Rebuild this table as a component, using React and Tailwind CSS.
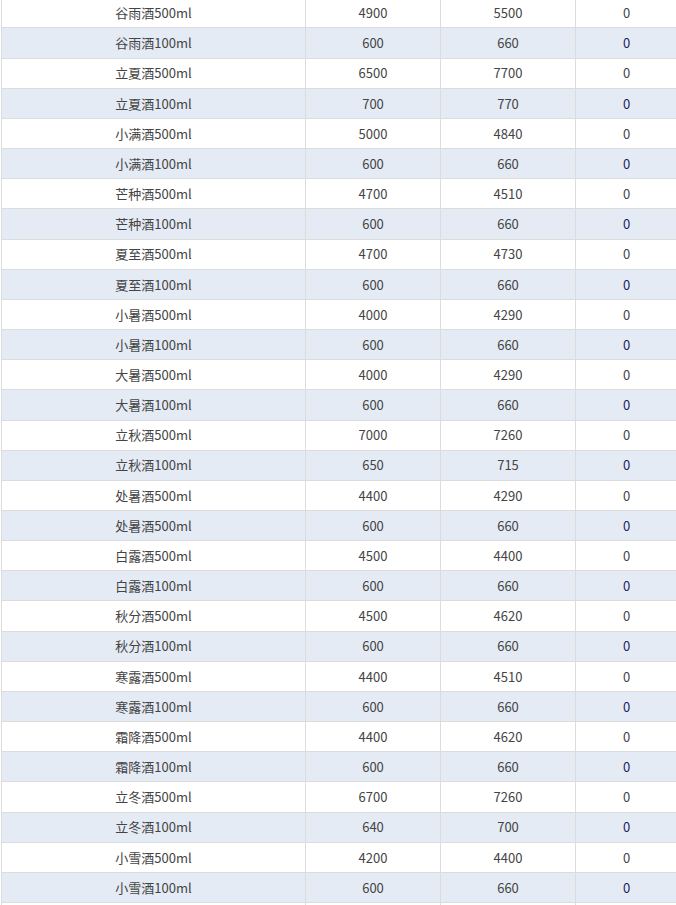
import React from "react";

const rows = [
  ["谷雨酒500ml", 4900, 5500],
  ["谷雨酒100ml", 600, 660],
  ["立夏酒500ml", 6500, 7700],
  ["立夏酒100ml", 700, 770],
  ["小满酒500ml", 5000, 4840],
  ["小满酒100ml", 600, 660],
  ["芒种酒500ml", 4700, 4510],
  ["芒种酒100ml", 600, 660],
  ["夏至酒500ml", 4700, 4730],
  ["夏至酒100ml", 600, 660],
  ["小暑酒500ml", 4000, 4290],
  ["小暑酒100ml", 600, 660],
  ["大暑酒500ml", 4000, 4290],
  ["大暑酒100ml", 600, 660],
  ["立秋酒500ml", 7000, 7260],
  ["立秋酒100ml", 650, 715],
  ["处暑酒500ml", 4400, 4290],
  ["处暑酒500ml", 600, 660],
  ["白露酒500ml", 4500, 4400],
  ["白露酒100ml", 600, 660],
  ["秋分酒500ml", 4500, 4620],
  ["秋分酒100ml", 600, 660],
  ["寒露酒500ml", 4400, 4510],
  ["寒露酒100ml", 600, 660],
  ["霜降酒500ml", 4400, 4620],
  ["霜降酒100ml", 600, 660],
  ["立冬酒500ml", 6700, 7260],
  ["立冬酒100ml", 640, 700],
  ["小雪酒500ml", 4200, 4400],
  ["小雪酒100ml", 600, 660],
];

export default function App() {
  return (
    <div
      className="h-[905px] overflow-hidden bg-white text-[13px] text-[#444]"
      style={{ fontFamily: '"Noto Sans CJK SC", "Noto Sans", sans-serif' }}
    >
      <div className="ml-px -mt-[1.7px] w-[676px] border-l border-[#dcdcdc]">
        {rows.map(([name, cost, price], i) => {
          const odd = i % 2 === 1;
          return (
            <div
              key={i}
              className={`grid h-[30.16px] grid-cols-[304px_135px_135px_102px] border-b border-[#dcdcdc] ${
                odd ? "bg-[#e5ebf5]" : "bg-white"
              }`}
            >
              <div className="flex items-center justify-center border-r border-[#dcdcdc]">
                {name}
              </div>
              <div className="flex items-center justify-center border-r border-[#dcdcdc]">
                {cost}
              </div>
              <div className="flex items-center justify-center border-r border-[#dcdcdc]">
                {price}
              </div>
              <div
                className={`flex items-center justify-center border-r border-[#dcdcdc] ${
                  odd ? "text-[#1e2460]" : ""
                }`}
              >
                0
              </div>
            </div>
          );
        })}
        {/* next row, only its top edge is on screen */}
        <div className="grid h-[30.16px] grid-cols-[304px_135px_135px_102px]">
          <div className="border-r border-[#dcdcdc]" />
          <div className="border-r border-[#dcdcdc]" />
          <div className="border-r border-[#dcdcdc]" />
          <div className="border-r border-[#dcdcdc]" />
        </div>
      </div>
    </div>
  );
}
